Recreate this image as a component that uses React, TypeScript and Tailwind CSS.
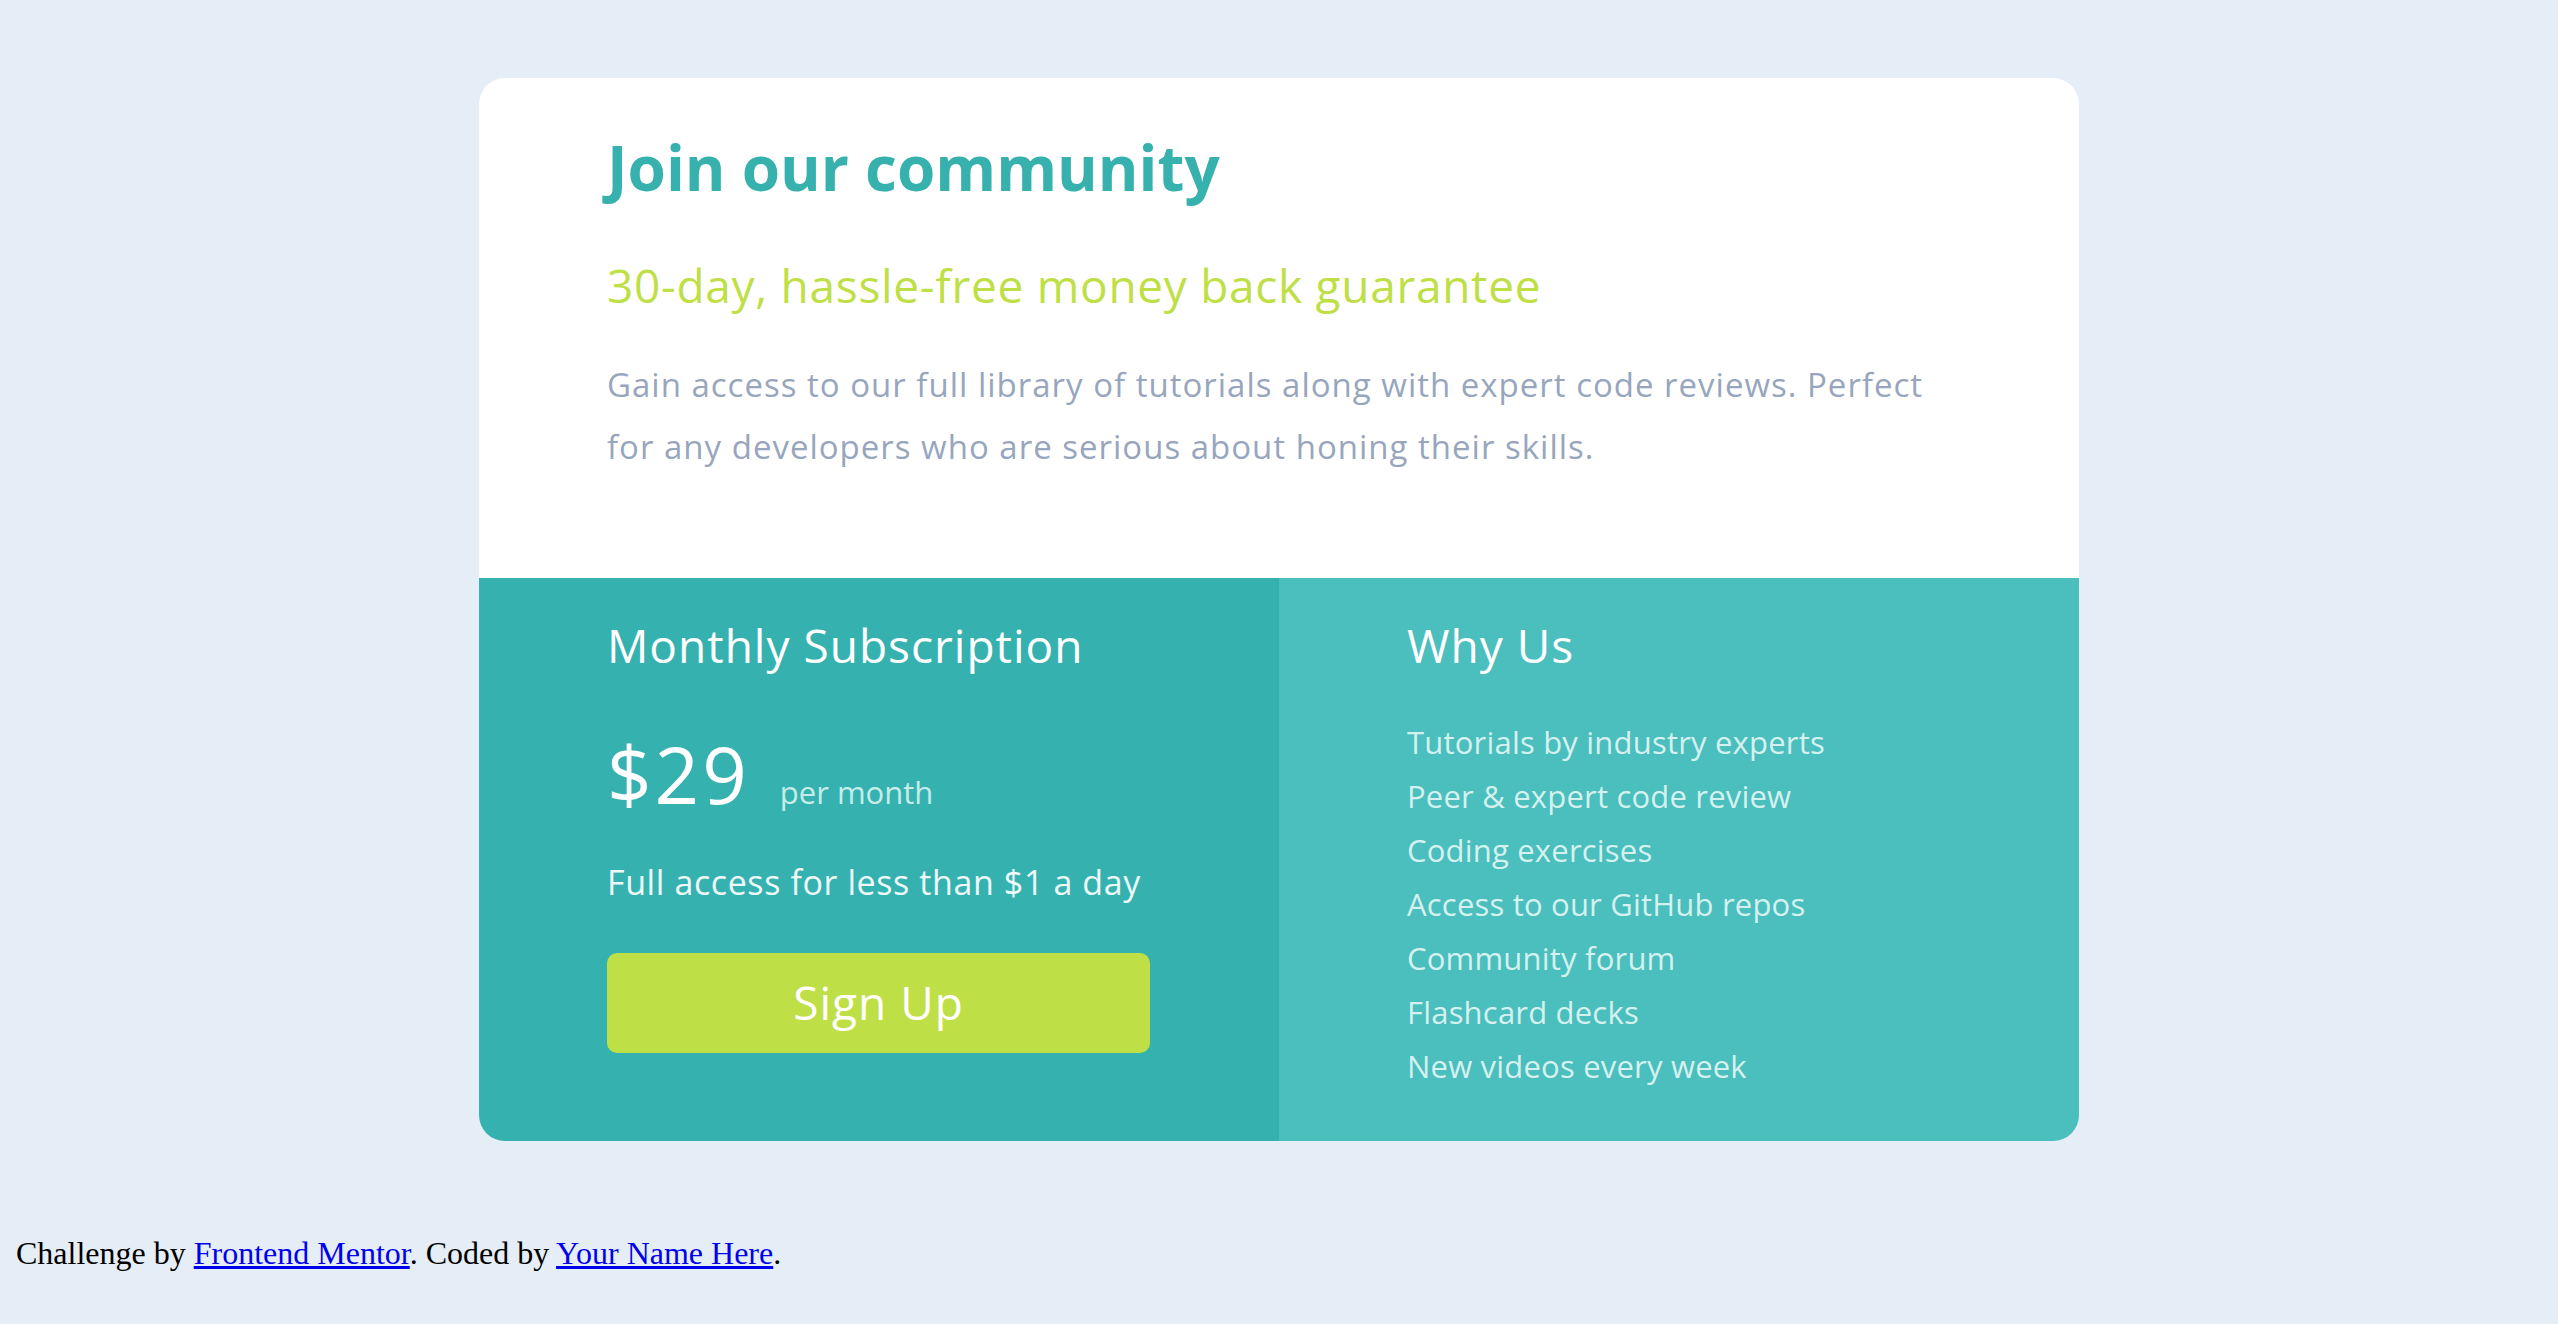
const perks = [
  "Tutorials by industry experts",
  "Peer & expert code review",
  "Coding exercises",
  "Access to our GitHub repos",
  "Community forum",
  "Flashcard decks",
  "New videos every week",
];

const PriceCard = () => {
  return (
    <div className="mx-auto w-[1600px] overflow-hidden rounded-[26px] font-['Open_Sans',sans-serif]">
      <div className="h-[500px] bg-white pl-[128px] pr-[128px] pt-[58px]">
        <h1 className="text-[62px] font-bold leading-[62px] text-[#36b1ae]">
          Join our community
        </h1>
        <h2 className="mt-[64px] text-[46px] leading-[46px] tracking-[0.7px] text-[#bfdf47]">
          30-day, hassle-free money back guarantee
        </h2>
        <p className="mt-[46px] text-[33px] leading-[62px] tracking-[1px] text-[#98a6bd]">
          Gain access to our full library of tutorials along with expert code
          reviews. Perfect for any developers who are serious about honing their
          skills.
        </p>
      </div>
      <div className="grid grid-cols-2">
        <div className="bg-[#35b2b0] pb-[88px] pl-[128px] pt-[44px] text-white">
          <h3 className="text-[46px] leading-[46px] tracking-[1px]">
            Monthly Subscription
          </h3>
          <div className="mt-[67px] flex items-baseline gap-[30px]">
            <span className="text-[78px] leading-[78px] tracking-[3px]">$29</span>
            <span className="text-[31px] text-[#c6ece9]">per month</span>
          </div>
          <p className="mt-[49px] text-[34px] leading-[34px] tracking-[0.6px] text-[#eef8f8]">
            Full access for less than $1 a day
          </p>
          <button className="mt-[54px] h-[100px] w-[543px] rounded-[10px] bg-[#bfdf47] text-[46px] font-medium tracking-[1px] text-white">
            Sign Up
          </button>
        </div>
        <div className="bg-[#4bbebe] pl-[128px] pt-[44px] text-white">
          <h3 className="text-[46px] leading-[46px] tracking-[1px]">Why Us</h3>
          <ul className="mt-[47px]">
            {perks.map((p) => (
              <li
                key={p}
                className="text-[31px] leading-[54px] tracking-[0.2px] text-[#d5f1ef]"
              >
                {p}
              </li>
            ))}
          </ul>
        </div>
      </div>
    </div>
  );
};

export default function App() {
  return (
    <div className="min-h-screen bg-[#e5eef6] pt-[78px]">
      <PriceCard />
      <div className="mt-[94px] pl-[16px] font-['Liberation_Serif',serif] text-[32px] leading-[36px] text-black">
        Challenge by{" "}
        <a href="#" className="text-[#0000ee] underline">
          Frontend Mentor
        </a>
        . Coded by{" "}
        <a href="#" className="text-[#0000ee] underline">
          Your Name Here
        </a>
        .
      </div>
    </div>
  );
}
